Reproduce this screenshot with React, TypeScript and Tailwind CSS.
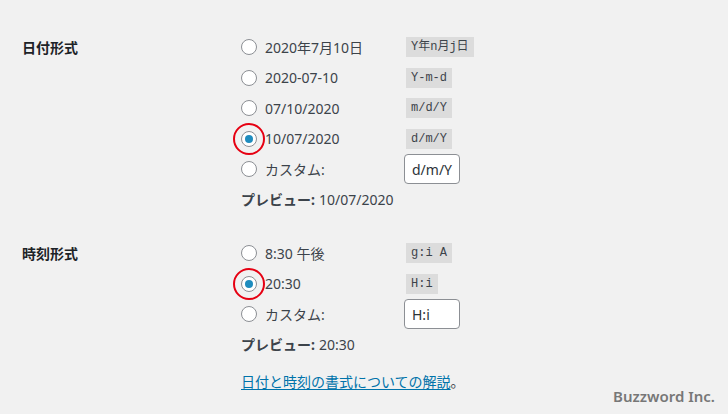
import React from "react";

const FONT = "font-['Noto_Sans','Noto_Sans_CJK_JP',sans-serif]";
const MONO = "font-['Liberation_Mono','Noto_Sans_CJK_JP',monospace]";

type Opt = { label: string; code?: string; checked?: boolean; custom?: string };

const DATE_OPTS: Opt[] = [
  { label: "2020年7月10日", code: "Y年n月j日" },
  { label: "2020-07-10", code: "Y-m-d" },
  { label: "07/10/2020", code: "m/d/Y" },
  { label: "10/07/2020", code: "d/m/Y", checked: true },
  { label: "カスタム:", custom: "d/m/Y" },
];

const TIME_OPTS: Opt[] = [
  { label: "8:30 午後", code: "g:i A" },
  { label: "20:30", code: "H:i", checked: true },
  { label: "カスタム:", custom: "H:i" },
];

function Radio({ checked }: { checked?: boolean }) {
  return (
    <span className="relative flex h-4 w-4 shrink-0 items-center justify-center rounded-full border border-[#8c8f94] bg-white">
      {checked && <span className="h-2 w-2 rounded-full bg-[#1e8cbe]" />}
      {checked && (
        <span className="pointer-events-none absolute left-1/2 top-1/2 h-[32px] w-[32px] -translate-x-1/2 -translate-y-1/2 rounded-full border-2 border-[#e60012]" />
      )}
    </span>
  );
}

function OptionRow({ opt }: { opt: Opt }) {
  return (
    <div className="flex h-[30.5px] items-center">
      <Radio checked={opt.checked} />
      <span className="ml-2 w-[141px] text-[14px] text-[#3c434a]">{opt.label}</span>
      {opt.code && (
        <code className={`${MONO} bg-[#dcdcdc] px-[5px] pb-[1px] pt-[2px] text-[12px] leading-[17px] text-[#3c434a]`}>
          {opt.code}
        </code>
      )}
      {opt.custom && (
        <span className="-ml-[2px] flex h-[30px] w-[56px] items-center rounded-[4px] border border-[#8c8f94] bg-white px-[7px] text-[14px] text-[#2c3338]">
          {opt.custom}
        </span>
      )}
    </div>
  );
}

function Section({ title, opts, preview }: { title: string; opts: Opt[]; preview: string }) {
  return (
    <div className="flex">
      <div className="w-[219px]">
        <div className="flex h-[30.5px] items-center text-[14px] font-bold text-[#1d2327]">{title}</div>
      </div>
      <div className="flex flex-col">
        {opts.map((o) => (
          <OptionRow key={o.label + (o.code ?? "")} opt={o} />
        ))}
        <div className="flex h-[30.5px] items-center text-[14px] text-[#3c434a]">
          <span className="font-bold">プレビュー:</span>
          <span className="ml-1">{preview}</span>
        </div>
      </div>
    </div>
  );
}

export default function App() {
  return (
    <div className={`${FONT} relative h-[414px] w-[728px] overflow-hidden bg-[#f1f1f1]`}>
      <div className="pl-[22px] pt-[32px]">
        <Section title="日付形式" opts={DATE_OPTS} preview="10/07/2020" />
        <div className="h-[23px]" />
        <Section title="時刻形式" opts={TIME_OPTS} preview="20:30" />
        <div className="mt-[6px] flex h-[30px] items-center pl-[219px] text-[14px] text-[#3c434a]">
          <a href="#" className="text-[#0073aa] underline underline-offset-2">
            日付と時刻の書式についての解説
          </a>
          <span>。</span>
        </div>
      </div>
      <div className="absolute bottom-[7px] right-[13px] text-[15px] font-semibold text-[#777777]">
        Buzzword Inc.
      </div>
    </div>
  );
}
